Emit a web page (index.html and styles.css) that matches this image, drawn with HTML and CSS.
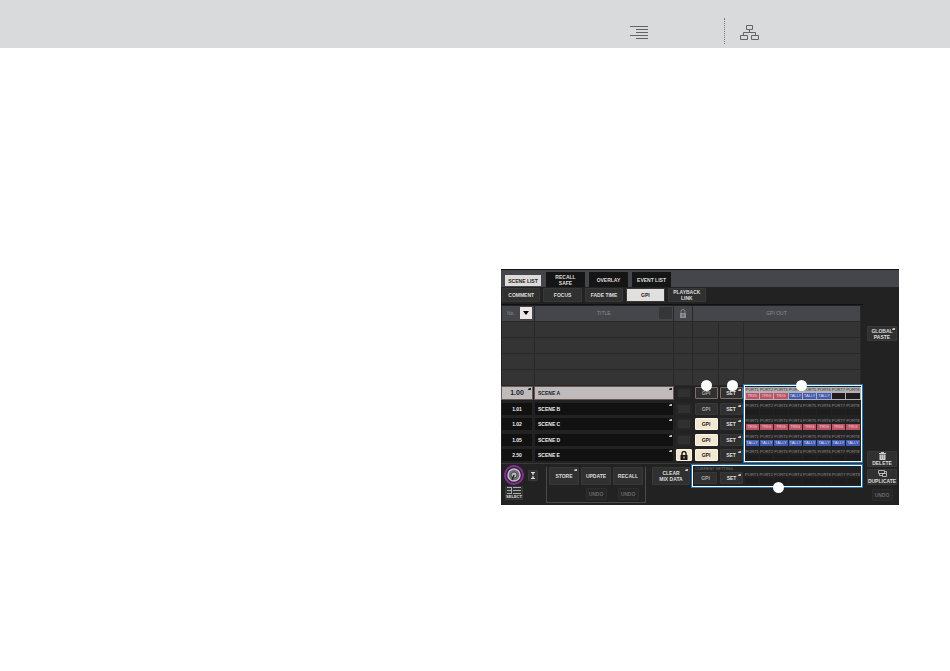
FILE: index.html
```html
<!DOCTYPE html>
<html lang="en">
<head>
<meta charset="utf-8">
<title>Scene List</title>
<link rel="stylesheet" href="styles.css">
</head>
<body>
<header class="top">
  <a class="top-link" href="#contents" aria-label="Contents"><svg width="18" height="14" viewBox="0 0 18 14"><path d="M0 .5h18M6 3.500h12M6 6.500h12M0 9.500h18M6 12.500h12" /></svg></a>
  <span class="dots"></span>
  <a class="top-link" href="#diagram" aria-label="Block diagram"><svg width="20" height="15" viewBox="0 0 20 15"><path d="M6.500 .5h6v4h-6zM.5 10.500h7v4h-7zM11.500 10.500h7v4h-7zM9.500 4.500v3M3.500 10.500v-3h12v3" /></svg></a>
</header>
<main class="page">
<section class="panel">
  <nav class="tabs">
    <button class="tab on">SCENE LIST</button><button class="tab">RECALL<br>SAFE</button><button class="tab">OVERLAY</button><button class="tab">EVENT LIST</button>
  </nav>
  <div class="body">
    <div class="left">
      <div class="subtabs">
        <button class="btn">COMMENT</button><button class="btn">FOCUS</button><button class="btn">FADE TIME</button><button class="btn on">GPI</button><button class="btn">PLAYBACK<br>LINK</button>
      </div>
      <div class="list">
      <table class="scenes">
        <colgroup><col class="c-no"><col><col class="c-lock"><col class="c-gpi"><col class="c-set"><col class="c-ports"></colgroup>
        <thead><tr>
          <th><div class="no">No.<button class="sort" aria-label="Sort"><svg width="6" height="4" viewBox="0 0 6 4"><path d="M0 0h6L3 4z"/></svg></button></div></th>
          <th><div class="title">TITLE<span class="slot"></span></div></th>
          <th><svg class="lock" width="8" height="9" viewBox="0 0 8 9"><path d="M2 4V2.500a2 2 0 0 1 4 0V4" fill="none" stroke="currentColor"/><path d="M1 4h6v5H1zM3.500 5.500v2h1v-2z" fill="currentColor" fill-rule="evenodd"/></svg></th>
          <th colspan="3">GPI OUT</th>
        </tr></thead>
        <tbody id="rows"></tbody>
      </table>
      <span class="frame frame-list"></span>
      <span class="pin pin-a"></span><span class="pin pin-b"></span><span class="pin pin-c"></span>
      </div>
      <div class="bottom">
        <div class="select">
          <svg class="knob" width="22" height="20" viewBox="0 0 22 20"><circle cx="11" cy="10" r="9" fill="#31203a" stroke="#8b2c9b" stroke-width="2"/><circle cx="11" cy="10" r="6" fill="#6d6b73" stroke="#c2c0c5" stroke-width="1.500"/><circle cx="11" cy="10" r="3" fill="#b7b5ba" stroke="#55535a"/><path d="M11 10L9 15" stroke="#222" stroke-width="1.500"/></svg>
          <button class="btn mini" aria-label="Scroll"><svg width="6" height="7" viewBox="0 0 6 7"><path d="M1 .5h4M1 6.500h4M3 1v1.500M3 4.500V6M2 2h2M2 5h2" stroke="#ddd"/></svg></button>
          <button class="btn pick"><svg width="14" height="7" viewBox="0 0 14 7"><path d="M0 .5h4M0 3.500h4M0 6.500h4M6 .5h8M6 3.500h8M6 6.500h8M4.500 0v7" stroke="#aaa"/></svg>SELECT</button>
        </div>
        <div class="actions">
          <button class="btn big mark">STORE</button><button class="btn big">UPDATE</button><button class="btn big">RECALL</button>
          <button class="btn undo second" disabled>UNDO</button><button class="btn undo" disabled>UNDO</button>
        </div>
        <button class="btn big clear mark">CLEAR<br>MIX DATA</button>
        <div class="current">
          <span class="caption">CURRENT SETTING</span>
          <button class="btn gpi">GPI</button><button class="btn set mark">SET</button>
          <div class="ports" id="current"></div>
          <span class="frame frame-current"></span><span class="pin pin-d"></span>
        </div>
      </div>
    </div>
    <aside class="side">
      <button class="btn paste mark">GLOBAL<br>PASTE</button>
      <button class="btn tool"><svg width="7" height="8" viewBox="0 0 7 8"><path d="M2 0h3v1h2v1H0V1h2zM.5 2.500h6V8h-6z" fill="#ccc"/><path d="M2.500 3v4M4.500 3v4" stroke="#777" stroke-width=".6"/></svg>DELETE</button>
      <button class="btn tool"><svg width="9" height="8" viewBox="0 0 9 8"><path d="M.5 .5h6v3h-6zM4.500 3.500h4v3h-4zM1.500 3.500v2h3M6.500 1.500h2v2" fill="none" stroke="#ccc" stroke-width=".8"/></svg>DUPLICATE</button>
      <button class="btn undo" disabled>UNDO</button>
    </aside>
  </div>
</section>
</main>
<script src="app.js"></script>
</body>
</html>
```
FILE: app.js
```js
const scenes = [
  ['1.00', 'SCENE A', 0, 0, 'TTTLLL  '],
  ['1.01', 'SCENE B', 0, 0, '        '],
  ['1.02', 'SCENE C', 0, 1, 'TTTTTTTT'],
  ['1.05', 'SCENE D', 0, 1, 'LLLLLLLL'],
  ['2.50', 'SCENE E', 1, 1, '        ']
];
const kinds = { T: ['trig', 'TRIG'], L: ['tally', 'TALLY'], ' ': ['none', ''] };
const ports = s => [...s].map((k, i) =>
  `<span class="port">PORT${i + 1}<b class="${kinds[k][0]}">${kinds[k][1]}</b></span>`).join('');
const lock = '<svg class="lock" width="8" height="9" viewBox="0 0 8 9"><path d="M2 4V2.500a2 2 0 0 1 4 0V4" fill="none" stroke="currentColor" stroke-width="1.400"/><path d="M.5 4h7v5h-7zM3.500 5.500v2h1v-2z" fill="currentColor" fill-rule="evenodd"/></svg>';
const blank = '<tr class="blank"><td></td><td></td><td></td><td></td><td></td><td></td></tr>';
document.getElementById('rows').innerHTML = blank.repeat(4) + scenes.map((s, i) =>
  `<tr class="scene${i ? '' : ' current-scene'}">
    <td><div class="cell num mark">${s[0]}</div></td>
    <td><div class="cell name mark">${s[1]}</div></td>
    <td><button class="btn lk${s[2] ? ' lit' : ''}" aria-label="Protect">${s[2] ? lock : ''}</button></td>
    <td><button class="btn gpi${s[3] ? ' lit' : ''}">GPI</button></td>
    <td><button class="btn set mark">SET</button></td>
    <td><div class="ports">${ports(s[4])}</div></td>
  </tr>`).join('');
document.getElementById('current').innerHTML = ports('        ');
```
FILE: styles.css
```css
* { box-sizing: border-box; }
body { margin: 0; background: #fff; font: bold 5px/6px "Liberation Sans", Arial, sans-serif; color: #ddd; }
button { font: inherit; color: inherit; border: 0; padding: 0; margin: 0; display: flex; flex-direction: column; align-items: center; justify-content: center; text-align: center; white-space: nowrap; }
svg { display: block; flex: none; }

.top { height: 48px; background: #d9dadc; display: flex; justify-content: flex-end; align-items: flex-start; padding: 18px 190px 0 0; }
.top-link { padding-top: 8px; }
.dots + .top-link { padding-top: 7px; }
.top-link path { fill: none; stroke: #626467; }
.dots { height: 26px; border-left: 1px dotted #77797c; margin: 0 15px 0 76px; }

.page { padding: 221px 51px 20px 501px; }
.panel { background: #222223; border-top: 1px solid #141414; }
.tabs { height: 17px; background: #45464b; display: flex; align-items: flex-end; gap: 4px; padding-left: 4px; }
.tab { width: 39px; height: 15px; background: #151515; }
.tab.on { width: 36px; height: 11px; margin: 0 1px 1px 0; background: #dedcdb; color: #222; }

.body { display: flex; }
.left { flex: 1; min-width: 0; }
.subtabs { display: grid; grid-template-columns: repeat(5, 1fr); gap: 3px; padding: 1px 157px 3px 1px; height: 18px; border-bottom: 1px solid #111; }
.btn { background: #303031; border: 1px solid #383839; border-radius: 1px; }
.btn.on { background: #e2dfdf; color: #222; }
.btn.lit { background: #f2e7d2; color: #1b1712; border-color: #fff5e2; }
.mark { position: relative; }
.mark::after { content: ""; position: absolute; top: 1px; right: 1px; width: 3px; height: 2px; border-radius: 2px 0 0 0; background: #c5c2c2; }

.list { position: relative; padding: 1px 2px 0 1px; }
.scenes { width: 100%; border-collapse: collapse; table-layout: fixed; }
.c-no { width: 32px; } .c-lock { width: 19px; } .c-gpi { width: 26px; } .c-set { width: 25px; } .c-ports { width: 117px; }
th, td { padding: 0; }
th { height: 15px; background: #45464b; color: #8c8c90; border-right: 1px solid #28282a; font-weight: normal; }
.no { display: flex; align-items: center; justify-content: space-between; padding: 0 2px 0 5px; }
.sort { width: 12px; height: 12px; background: #eee6e4; color: #111; }
.title { position: relative; }
.slot { position: absolute; right: 1px; top: -3px; width: 13px; height: 12px; background: #363638; }
.lock { margin: auto; }
.blank td { height: 16px; background: #343435; border: 1px solid #28282a; border-left: 0; }
.scene td { height: 16px; background: #222223; vertical-align: middle; }
.scene:nth-child(even) td { height: 15px; }
.cell { height: 12px; background: #111; display: flex; align-items: center; color: #eee; }
.num { justify-content: center; margin-right: 2px; }
.num::after { display: none; }
.name { padding-left: 3px; margin: 0 1px; }
.current-scene .cell { background: #bfbbbc; color: #222; outline: 1px solid #695653; }
.current-scene .num { font-size: 7px; }
.current-scene .mark::after { display: block; background: #222; }
.current-scene .btn.mark::after { background: #c5c2c2; }
.current-scene .btn { border-color: #806e6a; }
.scene .btn { width: 100%; height: 12px; }
.scene .lk { width: 16px; margin: 0 2px; }
.lk:not(.lit) { border: 2px solid #262627; }
.scene .gpi { width: 23px; margin: 0 2px; }
.scene .set { width: 23px; margin-left: 1px; }
.gpi:not(.lit) { color: #a5a5a7; }

.ports { display: grid; grid-template-columns: repeat(8, minmax(0, 1fr)); gap: 1px; padding: 0 1px 0 2px; font-size: 4px; line-height: 6px; color: #97979a; }
.port { display: block; text-align: center; font-weight: normal; white-space: nowrap; }
.port b { display: block; height: 6px; color: #eed9df; background: #1d1d1e; font-weight: normal; }
.port .trig { background: #bd5365; }
.port .tally { background: #3b5bb5; }
.current-scene .ports { background: #b4b2b6; color: #222; padding-bottom: 1px; }

.frame { position: absolute; border: 1px solid #fff; outline: 1px solid #1b79bd; pointer-events: none; }
.frame-list { right: 1px; bottom: 1px; width: 118px; height: 77px; }
.pin { position: absolute; width: 11px; height: 11px; border-radius: 50%; background: #fff; }
.pin-a { right: 151px; bottom: 72px; }
.pin-b { right: 125px; bottom: 72px; }
.pin-c { right: 56px; bottom: 72px; }

.bottom { display: flex; align-items: flex-start; height: 42px; padding: 3px 1px 0 2px; border-top: 1px solid #38383a; }
.select { display: grid; grid-template-columns: 22px 10px; gap: 1px 3px; align-items: center; width: 43px; margin-top: -2px; }
.mini { height: 11px; }
.pick { width: 18px; height: 14px; margin-left: 2px; font-size: 4px; line-height: 5px; }
.actions { display: grid; grid-template-columns: repeat(3, 30px); grid-template-rows: 18px 12px; gap: 3px 2px; border: 1px solid #4a4a4c; border-top: 0; padding: 0 2px; height: 36px; width: 100px; }
.big { height: 18px; }
.undo { color: #666; width: 21px; height: 12px; justify-self: center; background: #262627; border-color: #2d2d2e; }
.second { grid-column: 2; }
.clear { width: 38px; margin: 0 auto 0 6px; }
.current { position: relative; width: 168px; display: grid; grid-template-columns: 23px 23px 1fr; column-gap: 2px; align-items: center; padding-top: 5px; }
.current .btn { height: 12px; }
.current .set { margin: 0 -1px 0 1px; }
.current .ports { margin: 0 1px 0 -1px; }
.caption { position: absolute; top: -1px; left: 1px; font-size: 4px; color: #777; font-weight: normal; }
.frame-current { left: -2px; right: 0; top: -2px; height: 22px; }
.pin-d { left: 79px; top: 15px; }

.side { width: 36px; display: flex; flex-direction: column; align-items: stretch; padding: 39px 2px 4px 4px; gap: 2px; }
.paste { height: 15px; margin-bottom: auto; }
.tool { height: 16px; }
.side .undo { align-self: center; margin-top: 2px; }
```
